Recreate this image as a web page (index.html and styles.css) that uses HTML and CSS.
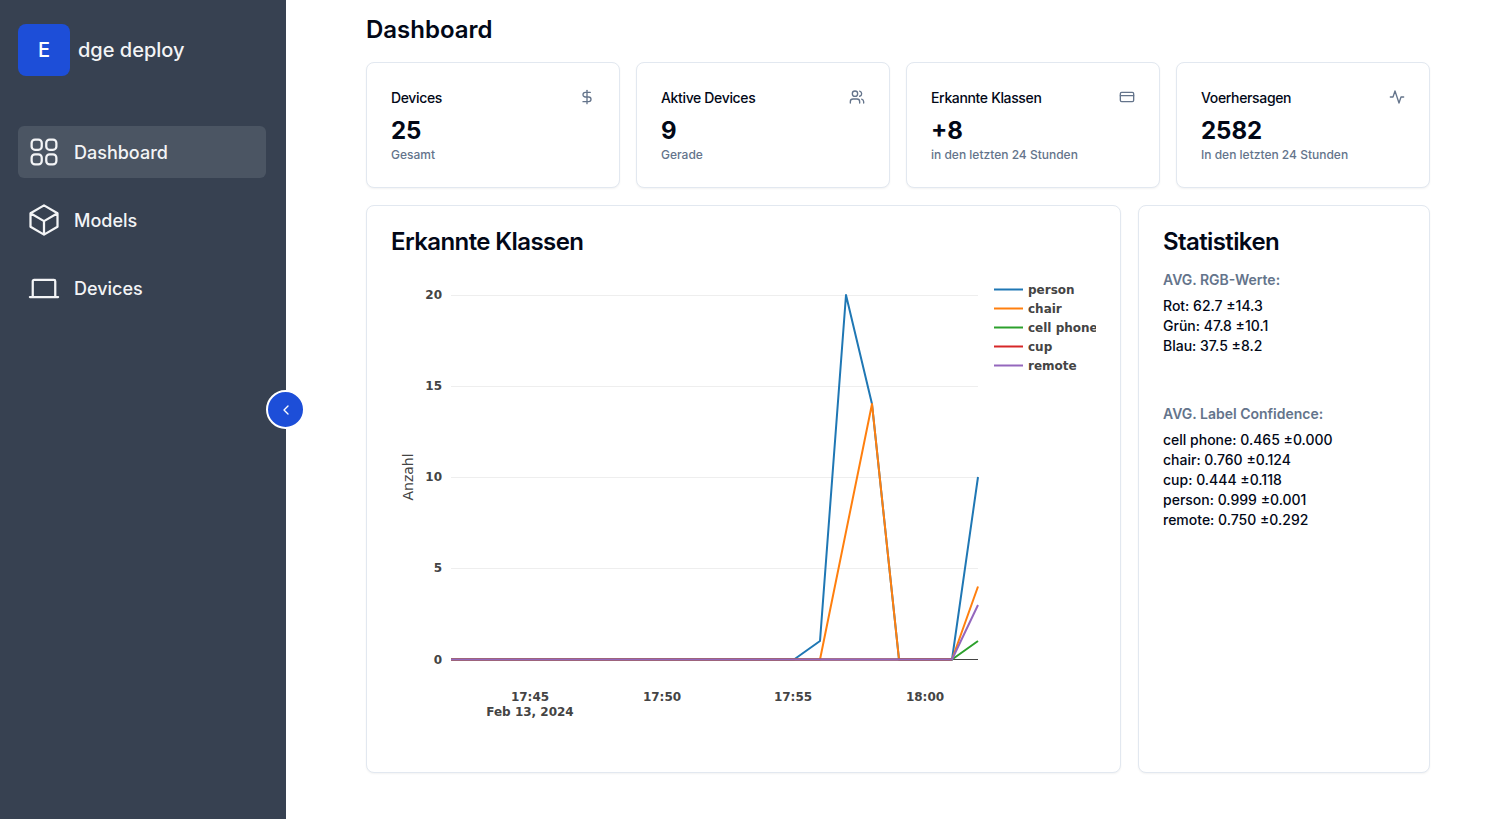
FILE: index.html
```html
<!DOCTYPE html>
<html lang="de">
<head>
  <meta charset="UTF-8" />
  <meta name="viewport" content="width=device-width, initial-scale=1.0"/>
  <title>Edge deploy</title>
  <link rel="stylesheet" href="styles.css">
</head>
<body>

  <!-- Sidebar -->
  <aside class="sidebar">
    <div class="brand">
      <div class="brand-mark">E</div>
      <span class="brand-name">dge deploy</span>
    </div>
    <nav class="nav">
      <a class="nav-item active" href="#">
        <svg class="nav-icon" viewBox="0 0 24 24"><path d="M3.75 6A2.25 2.25 0 0 1 6 3.75h2.25A2.25 2.25 0 0 1 10.5 6v2.25a2.25 2.25 0 0 1-2.25 2.25H6a2.25 2.25 0 0 1-2.25-2.25V6ZM3.75 15.75A2.25 2.25 0 0 1 6 13.5h2.25a2.25 2.25 0 0 1 2.25 2.25V18a2.25 2.25 0 0 1-2.25 2.25H6A2.25 2.25 0 0 1 3.75 18v-2.25ZM13.5 6a2.25 2.25 0 0 1 2.25-2.25H18A2.25 2.25 0 0 1 20.25 6v2.25A2.25 2.25 0 0 1 18 10.5h-2.25a2.25 2.25 0 0 1-2.25-2.25V6ZM13.5 15.75a2.25 2.25 0 0 1 2.25-2.25H18a2.25 2.25 0 0 1 2.25 2.25V18A2.25 2.25 0 0 1 18 20.25h-2.25A2.25 2.25 0 0 1 13.5 18v-2.25Z"/></svg>
        Dashboard
      </a>
      <a class="nav-item" href="#">
        <svg class="nav-icon" viewBox="0 0 24 24"><path d="m21 7.5-9-5.25L3 7.5m18 0-9 5.25m9-5.25v9l-9 5.25M3 7.5l9 5.25M3 7.5v9l9 5.25m0-9v9"/></svg>
        Models
      </a>
      <a class="nav-item" href="#">
        <svg class="nav-icon" viewBox="0 0 24 24"><path d="M4.5 18V7.5a.9.9 0 0 1 .9-.9h13.2a.9.9 0 0 1 .9.9V18M2.6 18h18.8"/></svg>
        Devices
      </a>
    </nav>
    <button class="collapse-btn">
      <svg viewBox="0 0 24 24"><path d="m15 18-6-6 6-6"/></svg>
    </button>
  </aside>

  <!-- Main content -->
  <main class="main">
    <h1 class="page-title">Dashboard</h1>

    <section class="stat-row">
      <div class="card stat-card">
        <div class="stat-head">
          <span class="stat-label">Devices</span>
          <svg class="stat-icon" viewBox="0 0 24 24"><path d="M12 2v20"/><path d="M17 5H9.5a3.5 3.5 0 0 0 0 7h5a3.5 3.5 0 0 1 0 7H6"/></svg>
        </div>
        <div class="stat-value">25</div>
        <div class="stat-sub">Gesamt</div>
      </div>
      <div class="card stat-card">
        <div class="stat-head">
          <span class="stat-label">Aktive Devices</span>
          <svg class="stat-icon" viewBox="0 0 24 24"><path d="M16 21v-2a4 4 0 0 0-4-4H6a4 4 0 0 0-4 4v2"/><circle cx="9" cy="7" r="4"/><path d="M22 21v-2a4 4 0 0 0-3-3.87"/><path d="M16 3.13a4 4 0 0 1 0 7.75"/></svg>
        </div>
        <div class="stat-value">9</div>
        <div class="stat-sub">Gerade</div>
      </div>
      <div class="card stat-card">
        <div class="stat-head">
          <span class="stat-label">Erkannte Klassen</span>
          <svg class="stat-icon" viewBox="0 0 24 24"><rect x="2" y="5" width="20" height="14" rx="2"/><path d="M2 10h20"/></svg>
        </div>
        <div class="stat-value">+8</div>
        <div class="stat-sub">in den letzten 24 Stunden</div>
      </div>
      <div class="card stat-card">
        <div class="stat-head">
          <span class="stat-label">Voerhersagen</span>
          <svg class="stat-icon" viewBox="0 0 24 24"><path d="M22 12h-4l-3 9L9 3l-3 9H2"/></svg>
        </div>
        <div class="stat-value">2582</div>
        <div class="stat-sub">In den letzten 24 Stunden</div>
      </div>
    </section>

    <section class="panel-row">
      <div class="card panel">
        <h2 class="panel-title">Erkannte Klassen</h2>
        <svg class="chart" viewBox="0 0 705 480">
          <!-- grid -->
          <path class="grid" d="M60 25.5H587M60 116.5H587M60 207.5H587M60 298.5H587"/>
          <path class="zero" d="M60 389.5H587"/>

          <!-- traces -->
          <polyline class="trace" stroke="#1f77b4" points="60,389.5 403,389.5 429,371 455,25 481,134 508,389.5 561,389.5 587,207"/>
          <polyline class="trace" stroke="#ff7f0e" points="60,389.5 429,389.5 481,134 508,389.5 561,389.5 587,316.5"/>
          <polyline class="trace" stroke="#2ca02c" points="60,389.5 561,389.5 587,371"/>
          <polyline class="trace" stroke="#d62728" points="60,389.5 561,389.5"/>
          <polyline class="trace" stroke="#9467bd" points="60,389.5 561,389.5 587,335"/>

          <!-- y axis -->
          <text class="tick" x="51" y="29" text-anchor="end">20</text>
          <text class="tick" x="51" y="120" text-anchor="end">15</text>
          <text class="tick" x="51" y="211" text-anchor="end">10</text>
          <text class="tick" x="51" y="302" text-anchor="end">5</text>
          <text class="tick" x="51" y="394" text-anchor="end">0</text>
          <text class="axis-title" transform="translate(22 207) rotate(-90)" text-anchor="middle">Anzahl</text>

          <!-- x axis -->
          <text class="tick" x="139" y="431" text-anchor="middle">17:45</text>
          <text class="tick" x="139" y="446" text-anchor="middle">Feb 13, 2024</text>
          <text class="tick" x="271" y="431" text-anchor="middle">17:50</text>
          <text class="tick" x="402" y="431" text-anchor="middle">17:55</text>
          <text class="tick" x="534" y="431" text-anchor="middle">18:00</text>

          <!-- legend -->
          <path class="legend-line" stroke="#1f77b4" d="M603 19.5H632"/>
          <text class="tick" x="637" y="24">person</text>
          <path class="legend-line" stroke="#ff7f0e" d="M603 38.5H632"/>
          <text class="tick" x="637" y="43">chair</text>
          <path class="legend-line" stroke="#2ca02c" d="M603 57.5H632"/>
          <text class="tick" x="637" y="62">cell phone</text>
          <path class="legend-line" stroke="#d62728" d="M603 76.5H632"/>
          <text class="tick" x="637" y="81">cup</text>
          <path class="legend-line" stroke="#9467bd" d="M603 95.5H632"/>
          <text class="tick" x="637" y="100">remote</text>
        </svg>
      </div>

      <div class="card panel">
        <h2 class="panel-title">Statistiken</h2>
        <div class="stat-group">
          <h3 class="group-title">AVG. RGB-Werte:</h3>
          <p>Rot: 62.7 ±14.3</p>
          <p>Grün: 47.8 ±10.1</p>
          <p>Blau: 37.5 ±8.2</p>
        </div>
        <div class="stat-group">
          <h3 class="group-title">AVG. Label Confidence:</h3>
          <p>cell phone: 0.465 ±0.000</p>
          <p>chair: 0.760 ±0.124</p>
          <p>cup: 0.444 ±0.118</p>
          <p>person: 0.999 ±0.001</p>
          <p>remote: 0.750 ±0.292</p>
        </div>
      </div>
    </section>
  </main>

</body>
</html>
```

FILE: styles.css
```css
* {
  box-sizing: border-box;
}

body {
  margin: 0;
  height: 100vh;
  display: flex;
  overflow: hidden;
  background: #fff;
  color: #020817;
  font-family: 'Inter', 'Liberation Sans', sans-serif;
}

/* Sidebar */
.sidebar {
  position: relative;
  flex: 0 0 286px;
  padding: 24px 20px 0 18px;
  background: #374151;
  color: #f3f4f6;
}

.brand {
  display: flex;
  align-items: center;
  gap: 8px;
  margin-bottom: 50px;
}

.brand-mark {
  width: 52px;
  height: 52px;
  display: flex;
  align-items: center;
  justify-content: center;
  border-radius: 8px;
  background: #1d4ed8;
  color: #fff;
  font-size: 20px;
  font-weight: 500;
}

.brand-name {
  font-size: 20px;
  font-weight: 500;
}

.nav {
  display: flex;
  flex-direction: column;
  gap: 16px;
}

.nav-item {
  display: flex;
  align-items: center;
  gap: 12px;
  padding: 8px;
  border-radius: 6px;
  color: #f3f4f6;
  font-size: 18px;
  font-weight: 500;
  text-decoration: none;
}

.nav-item.active {
  background: #4b5563;
}

.nav-icon {
  width: 36px;
  height: 36px;
  fill: none;
  stroke: currentColor;
  stroke-width: 1.5;
  stroke-linecap: round;
  stroke-linejoin: round;
}

.collapse-btn {
  position: absolute;
  top: 390px;
  right: -19px;
  width: 39px;
  height: 39px;
  display: flex;
  align-items: center;
  justify-content: center;
  padding: 0;
  border: 2px solid #fff;
  border-radius: 50%;
  background: #1d4ed8;
  cursor: pointer;
}

.collapse-btn svg {
  width: 16px;
  height: 16px;
  fill: none;
  stroke: #fff;
  stroke-width: 2;
  stroke-linecap: round;
  stroke-linejoin: round;
}

/* Main content */
.main {
  flex: 1;
  padding: 14px 77px 0 80px;
}

.page-title {
  margin: 0 0 16px;
  font-size: 24px;
  line-height: 32px;
  font-weight: 600;
}

.card {
  border: 1px solid #e2e8f0;
  border-radius: 8px;
  background: #fff;
  box-shadow: 0 1px 2px rgba(0, 0, 0, 0.05);
}

.stat-row {
  display: grid;
  grid-template-columns: repeat(4, 1fr);
  gap: 16px;
  margin-bottom: 17px;
}

.stat-card {
  padding: 24px;
}

.stat-head {
  display: flex;
  align-items: center;
  justify-content: space-between;
  height: 20px;
  margin-bottom: 8px;
}

.stat-label {
  font-size: 14px;
  font-weight: 500;
  letter-spacing: -0.025em;
}

.stat-icon {
  width: 16px;
  height: 16px;
  fill: none;
  stroke: #64748b;
  stroke-width: 2;
  stroke-linecap: round;
  stroke-linejoin: round;
}

.stat-value {
  font-size: 24px;
  line-height: 32px;
  font-weight: 700;
}

.stat-sub {
  font-size: 12px;
  line-height: 16px;
  font-weight: 500;
  color: #64748b;
}

.panel-row {
  display: grid;
  grid-template-columns: 755px 292px;
  gap: 17px;
}

.panel {
  height: 568px;
  padding: 24px;
}

.panel-title {
  margin: 0 0 16px;
  font-size: 24px;
  line-height: 24px;
  font-weight: 600;
  letter-spacing: -0.025em;
}

/* Chart */
.chart {
  display: block;
  width: 705px;
  height: 480px;
  overflow: hidden;
}

.grid {
  fill: none;
  stroke: #eee;
  stroke-width: 1;
}

.zero {
  fill: none;
  stroke: #444;
  stroke-width: 1;
}

.trace {
  fill: none;
  stroke-width: 2;
  stroke-linejoin: round;
}

.legend-line {
  fill: none;
  stroke-width: 2;
}

.tick {
  fill: #444;
  font-family: 'DejaVu Sans', sans-serif;
  font-size: 12px;
  font-weight: 700;
}

.axis-title {
  fill: #444;
  font-family: 'DejaVu Sans', sans-serif;
  font-size: 14px;
}

/* Statistics list */
.stat-group {
  margin-bottom: 48px;
}

.group-title {
  margin: 5px 0 6px;
  font-size: 14px;
  line-height: 20px;
  font-weight: 600;
  color: #64748b;
}

.stat-group p {
  margin: 0;
  font-size: 14px;
  line-height: 20px;
  font-weight: 500;
}
```
